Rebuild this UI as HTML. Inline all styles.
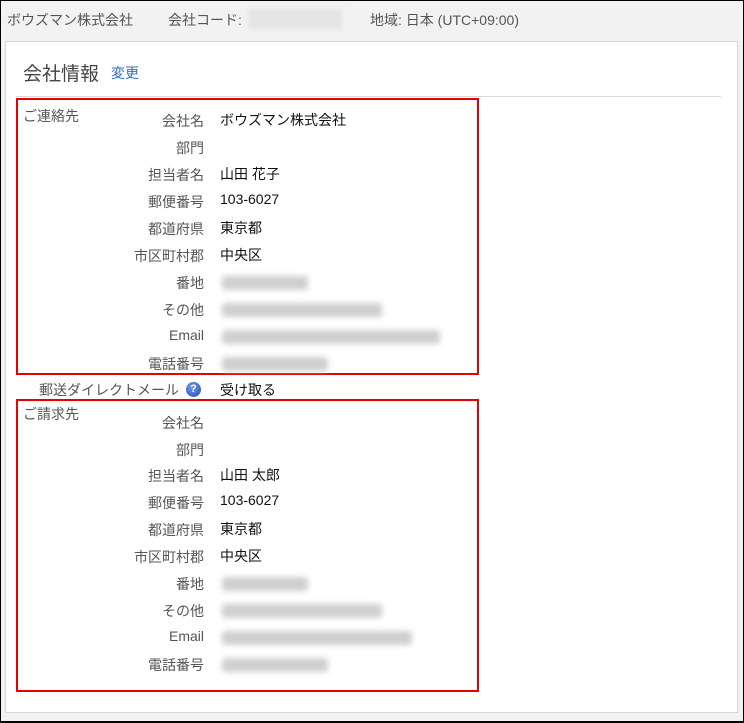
<!DOCTYPE html>
<html><head><meta charset="utf-8"><style>
*{margin:0;padding:0;box-sizing:border-box}
body{width:744px;height:723px;overflow:hidden;background:#f2f2f2;font-family:"Liberation Sans","Noto Sans CJK JP",sans-serif;font-size:14px;color:#333;position:relative}
.frame{position:absolute;left:0;top:0;width:744px;height:723px;border:1px solid #000;border-width:1px 1px 2px 1px;pointer-events:none}
.hdr{position:absolute;top:10px;font-size:14px;color:#555}
.panel{position:absolute;left:5px;top:41px;width:733px;height:672px;background:#fff;border:1px solid #d6d6d6}
.t{position:absolute;white-space:nowrap}
.lab{position:absolute;right:540px;text-align:right;color:#555;white-space:nowrap;margin-top:-1px}
.val{position:absolute;left:220px;color:#111;white-space:nowrap;margin-top:-1px}
.blur{position:absolute;left:222px;height:14px;background:#cfcfcf;filter:blur(3px);border-radius:3px;margin-top:-1px}
.red{position:absolute;left:16px;width:463px;border:2px solid #e60000}
</style></head><body>
<div class="hdr" style="left:7px">ボウズマン株式会社</div>
<div class="hdr" style="left:168px">会社コード:</div>
<div style="position:absolute;left:248px;top:9px;width:94px;height:20px;background:#e4e4e4;filter:blur(2px)"></div>
<div class="hdr" style="left:370px">地域: 日本 (UTC+09:00)</div>
<div class="panel"></div>
<div class="t" style="left:23px;top:59px;font-size:19px;color:#444">会社情報</div>
<div class="t" style="left:111px;top:63px;font-size:14px;color:#2a6fc9">変更</div>
<div style="position:absolute;left:16px;top:96px;width:705px;height:1px;background:#d8d8d8"></div>
<div class="red" style="top:98px;height:277px"></div>
<div class="red" style="top:399px;height:293px"></div>
<div class="t" style="left:23px;top:106px;color:#555">ご連絡先</div>
<div class="t" style="left:23px;top:404px;color:#555">ご請求先</div>

<div class="lab" style="top:112px">会社名</div><div class="val" style="top:111px">ボウズマン株式会社</div>
<div class="lab" style="top:139px">部門</div>
<div class="lab" style="top:166px">担当者名</div><div class="val" style="top:165px">山田 花子</div>
<div class="lab" style="top:193px">郵便番号</div><div class="val" style="top:192px">103-6027</div>
<div class="lab" style="top:220px">都道府県</div><div class="val" style="top:219px">東京都</div>
<div class="lab" style="top:247px">市区町村郡</div><div class="val" style="top:246px">中央区</div>
<div class="lab" style="top:274px">番地</div><div class="blur" style="top:277px;width:86px"></div>
<div class="lab" style="top:301px">その他</div><div class="blur" style="top:304px;width:160px"></div>
<div class="lab" style="top:328px">Email</div><div class="blur" style="top:331px;width:218px"></div>
<div class="lab" style="top:355px">電話番号</div><div class="blur" style="top:358px;width:106px"></div>

<div class="lab" style="top:381px;right:565px">郵送ダイレクトメール</div>
<div style="position:absolute;left:186px;top:382px;width:15px;height:15px;border-radius:50%;background:radial-gradient(circle at 40% 35%,#6d9be8,#1f4fb5);color:#fff;font-size:11px;font-weight:bold;text-align:center;line-height:15px">?</div>
<div class="val" style="top:381px">受け取る</div>

<div class="lab" style="top:414px">会社名</div>
<div class="lab" style="top:441px">部門</div>
<div class="lab" style="top:467px">担当者名</div><div class="val" style="top:466px">山田 太郎</div>
<div class="lab" style="top:494px">郵便番号</div><div class="val" style="top:493px">103-6027</div>
<div class="lab" style="top:521px">都道府県</div><div class="val" style="top:520px">東京都</div>
<div class="lab" style="top:548px">市区町村郡</div><div class="val" style="top:547px">中央区</div>
<div class="lab" style="top:575px">番地</div><div class="blur" style="top:578px;width:86px"></div>
<div class="lab" style="top:602px">その他</div><div class="blur" style="top:605px;width:160px"></div>
<div class="lab" style="top:629px">Email</div><div class="blur" style="top:632px;width:190px"></div>
<div class="lab" style="top:656px">電話番号</div><div class="blur" style="top:659px;width:106px"></div>
<div class="frame"></div>
</body></html>
